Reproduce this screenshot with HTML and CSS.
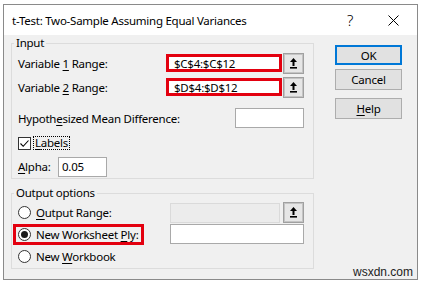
FILE: index.html
```html
<!DOCTYPE html>
<html>
<head>
<meta charset="utf-8">
<link rel="stylesheet" href="styles.css">
</head>
<body>
<div class="window">
  <div class="titlebar">
    <span class="title">t-Test: Two-Sample Assuming Equal Variances</span>
    <span class="q">?</span>
    <svg class="close" viewBox="0 0 11 11"><path d="M0.5 0.5 L10.5 10.5 M10.5 0.5 L0.5 10.5" stroke="#000" stroke-width="1" fill="none"/></svg>
  </div>
  <div class="body">
    <div class="left">
      <fieldset class="group">
        <legend>Input</legend>
        <div class="content input-content">
          <div class="row r-var">
            <span class="lbl">Variable <u>1</u> Range:</span>
            <span class="field hl">$C$4:$C$12</span>
            <span class="pick"><svg viewBox="0 0 7 11"><polygon points="3.5,0 7,4 0,4"/><rect x="2.5" y="3.5" width="2" height="4.5"/><rect x="0" y="9" width="7" height="1.6"/></svg></span>
          </div>
          <div class="row r-var">
            <span class="lbl">Variable <u>2</u> Range:</span>
            <span class="field hl">$D$4:$D$12</span>
            <span class="pick"><svg viewBox="0 0 7 11"><polygon points="3.5,0 7,4 0,4"/><rect x="2.5" y="3.5" width="2" height="4.5"/><rect x="0" y="9" width="7" height="1.6"/></svg></span>
          </div>
          <div class="row r-hyp">
            <span class="lbl">Hypoth<u>e</u>sized Mean Difference:</span>
            <span class="field hyp"></span>
          </div>
          <div class="row r-labels">
            <span class="check"><svg viewBox="0 0 11 11"><path d="M1.5 5.5 L4.2 8.3 L9.5 2.5" stroke="#000" stroke-width="1.1" fill="none"/></svg></span>
            <span class="focus"><u>L</u>abels</span>
          </div>
          <div class="row r-alpha">
            <span class="alpha-lbl"><u>A</u>lpha:</span>
            <span class="field alpha">0.05</span>
          </div>
        </div>
      </fieldset>
      <fieldset class="group out-group">
        <legend>Output options</legend>
        <div class="content output-content">
          <div class="row r-out1">
            <span class="opt"><span class="radio"></span><span class="otext"><u>O</u>utput Range:</span></span>
            <span class="field disabled"></span>
            <span class="pick"><svg viewBox="0 0 7 11"><polygon points="3.5,0 7,4 0,4"/><rect x="2.5" y="3.5" width="2" height="4.5"/><rect x="0" y="9" width="7" height="1.6"/></svg></span>
          </div>
          <div class="row r-out2">
            <span class="opt"><span class="hlbox"><span class="radio on"></span><span class="otext">New Worksheet <u>P</u>ly:</span></span></span>
            <span class="field ply"></span>
          </div>
          <div class="row r-out3">
            <span class="opt"><span class="radio"></span><span class="otext">New <u>W</u>orkbook</span></span>
          </div>
        </div>
      </fieldset>
    </div>
    <div class="buttons">
      <div class="btn default">OK</div>
      <div class="btn cancel">Cancel</div>
      <div class="btn help"><span><u>H</u>elp</span></div>
    </div>
  </div>
  <div class="watermark">wsxdn.com</div>
</div>
</body>
</html>
```
FILE: styles.css
```css
html, body {
  margin: 0;
  background: #fff;
}
body {
  font-family: "Noto Sans", "DejaVu Sans", sans-serif;
  font-size: 11.5px;
  letter-spacing: -0.25px;
  color: #000;
  white-space: nowrap;
}
u { text-decoration-thickness: 1px; text-underline-offset: 2px; }

.window {
  position: relative;
  margin: 4px 0 0 3px;
  width: 413px;
  height: 274px;
  border: 1px solid #8a8a8a;
  display: flex;
  flex-direction: column;
}
.titlebar {
  height: 30px;
  background: #fff;
  display: flex;
  align-items: center;
  padding-left: 8px;
}
.title { flex: 1; }
.q { font-size: 15px; font-weight: 300; }
.close { width: 11px; height: 11px; margin: 0 18px 0 35px; }

.body {
  flex: 1;
  background: #f0f0f0;
  display: flex;
  padding-left: 7px;
}
.left { width: 303px; flex-shrink: 0; display: flex; flex-direction: column; }

.group {
  margin: 0;
  padding: 0;
  border: 1px solid #dcdcdc;
  min-inline-size: 0;
}
.group legend {
  margin-left: 2px;
  padding: 0 2px;
  line-height: 16px;
}
.out-group { margin-top: 6px; }

.content { padding: 0 9px 1px 6px; }
.output-content { padding-top: 1px; }

.row { display: flex; align-items: center; }
.lbl { flex: 1; }

.field {
  box-sizing: border-box;
  flex-shrink: 0;
  height: 20px;
  background: #fff;
  border: 1px solid #a9a9a9;
  display: flex;
  align-items: center;
}
.field.hl {
  width: 116px;
  height: 18px;
  border: 3px solid #e3000f;
  padding-left: 5px;
}
.pick {
  box-sizing: border-box;
  flex-shrink: 0;
  width: 21px;
  height: 21px;
  margin-left: 1px;
  background: #e6e6e6;
  border: 1px solid #a0a0a0;
  box-shadow: inset 0 0 0 1px #c4c4c4;
  display: flex;
  align-items: center;
  justify-content: center;
}
.pick svg { width: 7px; height: 11px; fill: #000; }

.r-var { height: 24px; }
.r-hyp { height: 22px; margin-top: 8px; }
.field.hyp { width: 69px; }
.r-labels { height: 20px; margin-top: 4px; }
.check {
  box-sizing: border-box;
  width: 13px;
  height: 13px;
  border: 1px solid #333;
  background: #fff;
  display: flex;
}
.check svg { width: 11px; height: 11px; }
.focus {
  margin-left: 2px;
  padding: 0 1px;
  border: 1px dotted #000;
  line-height: 12px;
}
.r-alpha { height: 21px; margin-top: 3px; }
.alpha-lbl { width: 40px; }
.field.alpha { width: 49px; padding-left: 3px; }

.opt { width: 152px; flex-shrink: 0; display: flex; align-items: center; }
.otext { margin-left: 5px; }
.radio {
  box-sizing: border-box;
  flex-shrink: 0;
  width: 13px;
  height: 13px;
  border: 1px solid #333;
  border-radius: 50%;
  background: #fff;
  display: flex;
  align-items: center;
  justify-content: center;
}
.radio.on::after {
  content: "";
  width: 7px;
  height: 7px;
  border-radius: 50%;
  background: #1a1a1a;
}
.hlbox {
  box-sizing: border-box;
  flex-shrink: 0;
  display: flex;
  align-items: center;
  width: 131px;
  height: 21px;
  margin-left: -5px;
  padding-left: 2px;
  border: 3px solid #e3000f;
}

.r-out1 { height: 21px; }
.field.disabled { width: 110px; background: #ececec; border-color: #dadada; margin-right: 2px; }
.r-out2 { height: 22px; }
.field.ply { width: 134px; }
.r-out3 { height: 22px; }

.buttons {
  margin-left: 21px;
  padding-top: 10px;
  display: flex;
  flex-direction: column;
}
.btn {
  box-sizing: border-box;
  width: 67px;
  height: 21px;
  background: #e1e1e1;
  border: 1px solid #adadad;
  display: flex;
  align-items: center;
  justify-content: center;
}
.btn.default { height: 20px; border: 2px solid #0078d7; }
.btn.cancel { margin-top: 4px; }
.btn.help { margin-top: 8px; }

.watermark {
  position: absolute;
  right: 4px;
  bottom: 0;
  font-family: "Liberation Sans", Arial, sans-serif;
  font-size: 12px;
  letter-spacing: 0;
  line-height: 14px;
  color: #222;
}
```
